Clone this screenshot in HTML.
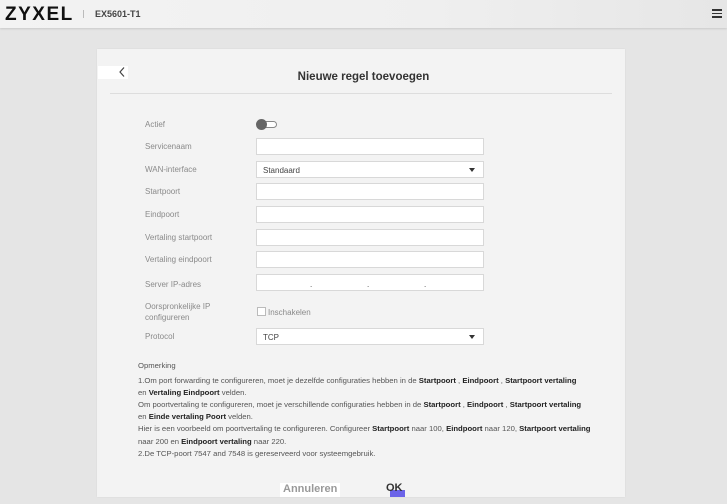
<!DOCTYPE html>
<html><head><meta charset="utf-8"><style>
*{margin:0;padding:0;box-sizing:border-box}
body{width:727px;height:504px;overflow:hidden;background:#e5e5e5;font-family:"Liberation Sans",sans-serif;position:relative;color:#555}
.hdr{position:absolute;left:0;top:0;width:727px;height:28px;background:linear-gradient(90deg,#f3f3f3 0%,#efefef 60%,#e6e6e6 100%);box-shadow:0 1px 2px rgba(0,0,0,.12)}
.logo{position:absolute;left:5px;top:4px;font-size:19px;font-weight:bold;color:#111;letter-spacing:1.5px}
.sep{position:absolute;left:83px;top:10px;width:1px;height:8px;background:#bbb}
.model{position:absolute;left:95px;top:9px;font-size:9px;color:#444;font-weight:bold}
.menu{position:absolute;left:712px;top:9px;width:10px}
.menu i{display:block;height:1.5px;background:#333;margin-bottom:2px}
.card{position:absolute;left:97px;top:49px;width:528px;height:448px;background:#f3f3f3;box-shadow:0 0 1px rgba(0,0,0,.1)}
.back{position:absolute;left:98px;top:66px;width:30px;height:13px;background:#fff}
.title{position:absolute;left:0;width:727px;top:71px;text-align:center;font-size:11.5px;font-weight:bold;color:#333}
.line{position:absolute;left:110px;top:93px;width:502px;height:1px;background:#ddd}
.lbl{position:absolute;left:145px;font-size:8px;color:#8a8a8a}
.inp{position:absolute;left:256px;width:228px;height:17px;background:#fff;border:1px solid #d8d8d8;font-size:8px;color:#444;padding:4px 6px}
.arr{position:absolute;right:8px;top:6px;width:0;height:0;border-left:3px solid transparent;border-right:3px solid transparent;border-top:4px solid #333}
.notes{position:absolute;left:138px;top:360px;font-size:7.7px;color:#555;line-height:12.1px}
.notes b{color:#222}
</style></head><body>
<div class="hdr"><div class="logo">ZYXEL</div><div class="sep"></div><div class="model">EX5601-T1</div>
<div class="menu"><i></i><i></i><i></i></div></div>
<div class="card"></div>
<div class="back"><svg width="30" height="13"><path d="M26 1.5 L22 6 L26 10.5" stroke="#444" stroke-width="1.2" fill="none"/></svg></div>
<div class="title">Nieuwe regel toevoegen</div>
<div class="line"></div>
<div class="lbl" style="top:120px">Actief</div>
<div style="position:absolute;left:256px;top:119px;width:21px;height:11px"><div style="position:absolute;left:6px;top:2px;width:15px;height:7px;border:1px solid #888;border-radius:4px;background:#fff"></div><div style="position:absolute;left:0;top:0;width:11px;height:11px;border-radius:6px;background:#666"></div></div>
<div class="lbl" style="top:142px">Servicenaam</div><div class="inp" style="top:138px"></div>
<div class="lbl" style="top:165px">WAN-interface</div><div class="inp" style="top:161px">Standaard<div class="arr"></div></div>
<div class="lbl" style="top:187px">Startpoort</div><div class="inp" style="top:183px"></div>
<div class="lbl" style="top:210px">Eindpoort</div><div class="inp" style="top:206px"></div>
<div class="lbl" style="top:233px">Vertaling startpoort</div><div class="inp" style="top:229px"></div>
<div class="lbl" style="top:255px">Vertaling eindpoort</div><div class="inp" style="top:251px"></div>
<div class="lbl" style="top:280px">Server IP-adres</div><div class="inp" style="top:274px"><span style="position:absolute;left:53px;top:5px">.</span><span style="position:absolute;left:110px;top:5px">.</span><span style="position:absolute;left:167px;top:5px">.</span></div>
<div class="lbl" style="top:301px;line-height:11px">Oorspronkelijke IP<br>configureren</div>
<div style="position:absolute;left:257px;top:307px;width:9px;height:9px;border:1px solid #bbb;background:#fff"></div>
<div class="lbl" style="left:268px;top:308px">Inschakelen</div>
<div class="lbl" style="top:332px">Protocol</div><div class="inp" style="top:328px">TCP<div class="arr"></div></div>
<div class="notes">Opmerking<br>
<div style="height:3px"></div>
1.Om port forwarding te configureren, moet je dezelfde configuraties hebben in de <b>Startpoort</b> , <b>Eindpoort</b> , <b>Startpoort vertaling</b><br>en <b>Vertaling Eindpoort</b> velden.<br>
Om poortvertaling te configureren, moet je verschillende configuraties hebben in de <b>Startpoort</b> , <b>Eindpoort</b> , <b>Startpoort vertaling</b><br>en <b>Einde vertaling Poort</b> velden.<br>
Hier is een voorbeeld om poortvertaling te configureren. Configureer <b>Startpoort</b> naar 100, <b>Eindpoort</b> naar 120, <b>Startpoort vertaling</b><br>naar 200 en <b>Eindpoort vertaling</b> naar 220.<br>
2.De TCP-poort 7547 and 7548 is gereserveerd voor systeemgebruik.</div>
<div style="position:absolute;left:280px;top:483px;width:60px;height:14px;background:#fff"></div>
<div style="position:absolute;left:283px;top:483px;font-size:11px;font-weight:bold;color:#999">Annuleren</div>
<div style="position:absolute;left:390px;top:490px;width:15px;height:7px;background:#6b63e8"></div>
<div style="position:absolute;left:386px;top:482px;font-size:11px;font-weight:bold;color:#333">OK</div>
</body></html>
